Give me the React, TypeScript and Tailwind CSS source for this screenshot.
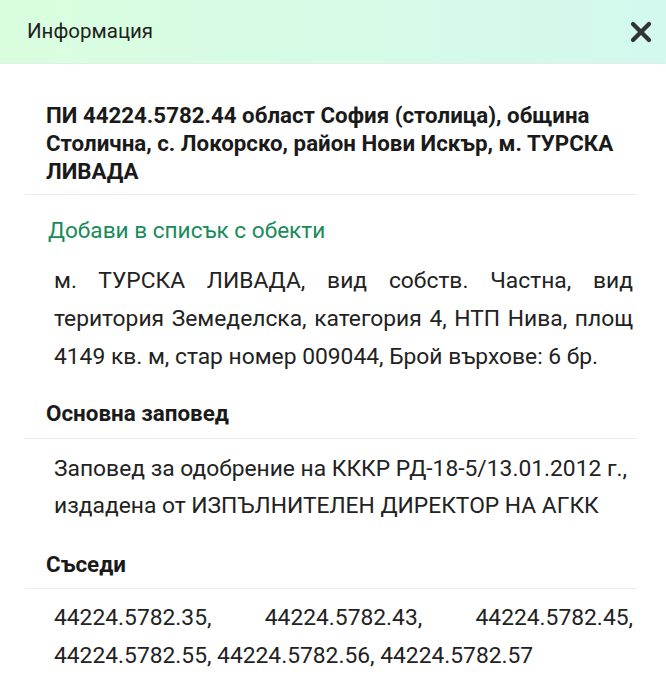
import { X } from "lucide-react";

const neighbours = [
  "44224.5782.35",
  "44224.5782.43",
  "44224.5782.45",
  "44224.5782.55",
  "44224.5782.56",
  "44224.5782.57",
];

export default function App() {
  return (
    <div
      className="w-[666px] h-[700px] bg-white text-[#1a1a1a] overflow-hidden"
      style={{ fontFamily: "Roboto, 'Noto Sans', sans-serif" }}
    >
      <div className="h-[64px] flex items-center justify-between pl-[27px] pr-[9px] bg-gradient-to-r from-[#d9fede] to-[#d3f8ee] border-b border-[#e3eee6]">
        <h1 className="text-[20.5px] text-[#222]">Информация</h1>
        <X className="w-[32px] h-[32px] text-[#333]" strokeWidth={3.2} />
      </div>

      <div className="pl-[25px] pr-[29px]">
        <div className="pl-[21px] pr-[4px] pt-[37px] pb-[9px] border-b border-[#ececec]">
          <h2 className="text-[22.3px] font-bold leading-[28px]">
            ПИ 44224.5782.44 област София (столица), община Столична, с. Локорско, район Нови Искър, м. ТУРСКА ЛИВАДА
          </h2>
        </div>

        <div className="pl-[23px] pt-[19px] text-[22.6px] text-[#1a8a5a]">Добави в списък с обекти</div>

        <p className="pl-[29px] pr-[4px] pt-[14px] text-[22.8px] leading-[38px] text-justify text-[#222]">
          м. ТУРСКА ЛИВАДА, вид собств. Частна, вид територия Земеделска, категория 4, НТП Нива, площ 4149 кв. м, стар номер 009044, Брой върхове: 6 бр.
        </p>

        <div className="pl-[21px] pt-[21px] pb-[7px] border-b border-[#ececec]">
          <h3 className="text-[22.4px] font-bold">Основна заповед</h3>
        </div>
        <p className="pl-[29px] pr-[4px] pt-[11px] text-[22.8px] leading-[37px] text-[#222]">
          Заповед за одобрение на КККР РД-18-5/13.01.2012 г., издадена от ИЗПЪЛНИТЕЛЕН ДИРЕКТОР НА АГКК
        </p>

        <div className="pl-[21px] pt-[24px] pb-[7px] border-b border-[#ececec]">
          <h3 className="text-[22.4px] font-bold">Съседи</h3>
        </div>
        <p className="pl-[29px] pr-[4px] pt-[10px] text-[22.8px] leading-[38px] text-justify text-[#222]">
          {neighbours.join(", ")}
        </p>
      </div>
    </div>
  );
}
